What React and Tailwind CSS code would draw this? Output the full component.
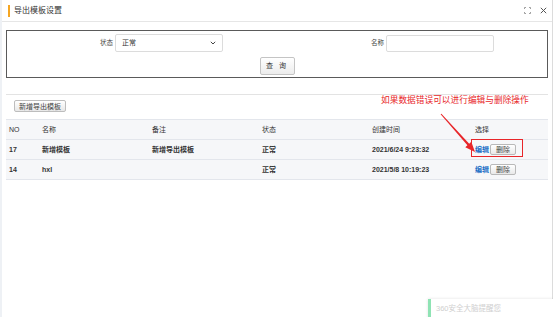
import React from 'react'

const font = "font-['Liberation_Sans','Noto_Sans_CJK_SC',sans-serif]"

const rows = [
  { no: '17', name: '新增模板', note: '新增导出模板', status: '正常', time: '2021/6/24 9:23:32' },
  { no: '14', name: 'hxl', note: '', status: '正常', time: '2021/5/8 10:19:23' },
]

function Row({ cells, bold, children }) {
  return (
    <div className="grid grid-cols-[33px_110px_110px_110px_103px_1fr] items-center h-[20px] pl-[3px] border-b border-[#e3e6ec]">
      {cells.map((c, i) => (
        <div key={i} className={`text-[7px] text-[#333] leading-none ${bold ? 'font-bold' : ''}`}>
          {c}
        </div>
      ))}
      <div className="flex items-center">{children}</div>
    </div>
  )
}

function Actions() {
  return (
    <>
      <span className="text-[7px] font-bold text-[#1d6fc6] w-[15px] leading-none">编辑</span>
      <button className="w-[26px] h-[11px] text-[7px] text-[#444] border border-[#b9b9b9] rounded-[2px] bg-gradient-to-b from-white to-[#e9e9e9] leading-none">
        删除
      </button>
    </>
  )
}

export default function App() {
  return (
    <div className={`relative w-[553px] h-[317px] bg-white overflow-hidden flex ${font}`}>
      {/* page behind the dialog */}
      <div className="w-[2px] h-full bg-[#eef1f5]" />

      <div className="flex-1 flex flex-col border-r border-[#dcdcdc]">
        {/* header */}
        <div className="h-[22px] flex items-center border-b border-[#e6e6e6] pl-[6px] pr-[5px]">
          <div className="w-[2px] h-[12px] bg-[#f5a623]" />
          <span className="ml-[4px] text-[8px] text-[#333]">导出模板设置</span>
          <div className="ml-auto flex items-center gap-[9px]">
            <svg width="7" height="7" viewBox="0 0 7 7" fill="none" stroke="#888" strokeWidth="0.8">
              <path d="M0.5 2V0.5H2M5 0.5H6.5V2M6.5 5V6.5H5M2 6.5H0.5V5" />
            </svg>
            <svg width="7" height="7" viewBox="0 0 7 7" fill="none" stroke="#555" strokeWidth="1">
              <path d="M0.8 0.8L6.2 6.2M6.2 0.8L0.8 6.2" />
            </svg>
          </div>
        </div>

        <div className="px-[4px] flex flex-col">
          {/* search box */}
          <div className="mt-[8px] h-[48px] border border-[#5a5a5a] pt-[3px] flex flex-col">
            <div className="grid grid-cols-2">
              <div className="flex items-center">
                <span className="w-[108px] text-right text-[6.5px] text-[#444] pr-[2px]">状态</span>
                <div className="w-[108px] h-[18px] border border-[#dcdcdc] rounded-[2px] flex items-center px-[6px]">
                  <span className="text-[7px] text-[#333]">正常</span>
                  <svg className="ml-auto" width="6" height="4" viewBox="0 0 6 4" fill="none" stroke="#444" strokeWidth="1">
                    <path d="M0.8 0.8L3 3L5.2 0.8" />
                  </svg>
                </div>
              </div>
              <div className="flex items-center">
                <span className="w-[109px] text-right text-[6.5px] text-[#444] pr-[2px]">名称</span>
                <div className="w-[108px] h-[17px] border border-[#dcdcdc] rounded-[2px]" />
              </div>
            </div>
            <div className="flex justify-center mt-[5px]">
              <button className="w-[35px] h-[18px] text-[7px] text-[#333] border border-[#c4c4c4] rounded-[2px] bg-gradient-to-b from-white to-[#ececec] tracking-[2px]">
                查 询
              </button>
            </div>
          </div>

          {/* divider + add button */}
          <div className="mt-[16px] border-t border-[#e3e3e3]" />
          <div className="mt-[5px] pl-[8px] flex">
            <button className="w-[52px] h-[12px] text-[7px] text-[#444] border border-[#bdbdbd] rounded-[2px] bg-gradient-to-b from-white to-[#e8e8e8] leading-none">
              新增导出模板
            </button>
          </div>

          {/* table */}
          <div className="mt-[7px] bg-[#f6f7f9] border-t border-[#e3e6ec]">
            <Row cells={['NO', '名称', '备注', '状态', '创建时间']}>
              <span className="text-[7px] text-[#333] leading-none">选择</span>
            </Row>
            {rows.map((r) => (
              <Row key={r.no} bold cells={[r.no, r.name, r.note, r.status, r.time]}>
                <Actions />
              </Row>
            ))}
          </div>
        </div>
      </div>

      {/* annotation overlay */}
      <div className="absolute left-[381px] top-[96px] text-[8.7px] text-[#e8262a] leading-none whitespace-nowrap">
        如果数据错误可以进行编辑与删除操作
      </div>
      <svg className="absolute left-[430px] top-[110px]" width="50" height="45" viewBox="0 0 50 45">
        <polygon points="10.6,4.3 37.4,35.3 35.3,37.2 45,42 41.3,31.8 39.2,33.7 11.4,3.7" fill="#e8262a" />
      </svg>
      <div className="absolute left-[471px] top-[139px] w-[52px] h-[18px] border-[1.5px] border-[#e8262a]" />

      {/* notification */}
      <div className="absolute left-[428px] top-[299px] w-[125px] h-[20px] bg-white shadow-[0_0_3px_rgba(0,0,0,0.12)] flex items-center">
        <div className="w-[3px] h-full bg-[#8fe3b4]" />
        <span className="ml-[5px] text-[7.5px] text-[#cfcfcf]">360安全大脑提醒您</span>
      </div>
    </div>
  )
}
